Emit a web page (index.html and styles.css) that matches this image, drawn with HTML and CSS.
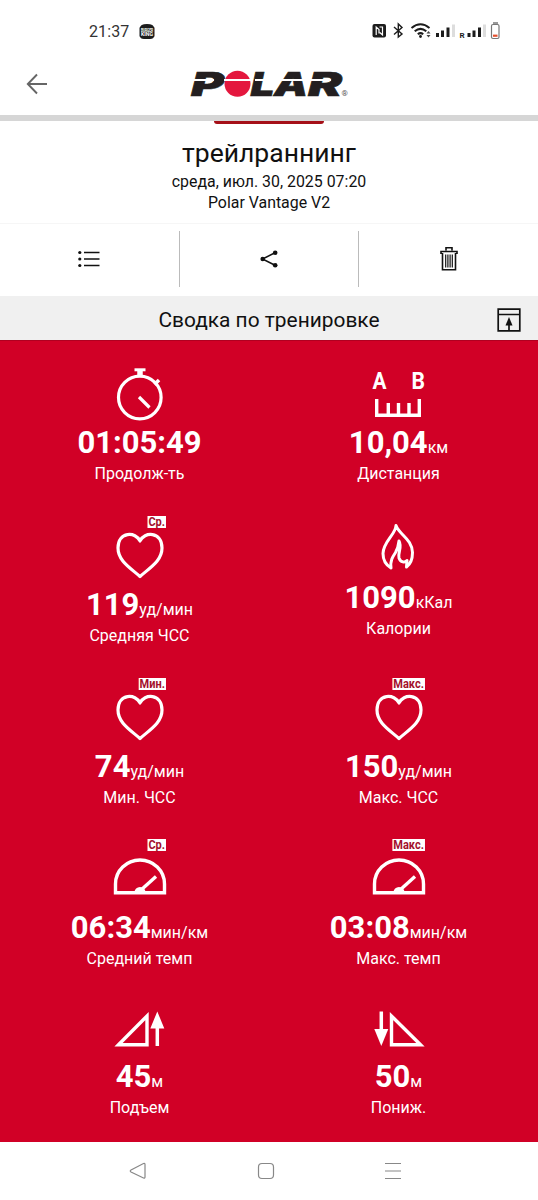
FILE: index.html
```html
<!DOCTYPE html>
<html lang="ru">

<head>
    <meta charset="UTF-8">
    <meta name="viewport" content="width=device-width, initial-scale=1.0">
    <title>Polar - Сводка по тренировке</title>
    <link rel="stylesheet" href="styles.css">
</head>

<body>
    <!-- shared icons -->
    <svg class="sprite" width="0" height="0">
        <symbol id="heart" viewBox="0 0 54 72">
            <path d="M27 26C23 16.500 5 16 5 33C5 46 17.500 53 27 61.500C36.500 53 49 46 49 33C49 16 31 16.500 27 26Z" fill="none" stroke="#fff" stroke-width="3.200" stroke-linejoin="round" />
        </symbol>
        <symbol id="gauge" viewBox="0 0 54 72">
            <path d="M2.500 54.800V46A24.500 24 0 0 1 51.500 46V54.800Z" fill="none" stroke="#fff" stroke-width="3.400" />
            <path d="M28 52L43 38.500" stroke="#fff" stroke-width="3.400" />
            <path d="M21.500 54.500A5.500 5.500 0 0 1 32.500 54.500Z" fill="#fff" />
        </symbol>
    </svg>

    <div class="status-bar">
        <div class="status-left">
            <span class="clock">21:37</span>
            <svg width="16" height="17" viewBox="0 0 16 17">
                <path d="M1 5Q1 1 8 1T15 5ZM1 13Q1 16 5 16H11Q15 16 15 13Z" fill="#1c1c1c" />
                <rect x="0.500" y="4" width="15" height="10" rx="1" fill="#1c1c1c" />
                <text x="2" y="8.800" font-size="4.500" textLength="12" lengthAdjust="spacingAndGlyphs">BURGER</text>
                <text x="2" y="13" font-size="4.500" textLength="12" lengthAdjust="spacingAndGlyphs">KING</text>
            </svg>
        </div>
        <svg width="132" height="20" viewBox="0 0 132 20">
            <!-- nfc -->
            <rect x="0.500" y="3" width="13.500" height="13.500" rx="2" fill="#1c1c1c" />
            <path d="M4.200 14V6L7 8.500V12.500M7.500 6H10.500V14L7.800 11.500" fill="none" stroke="#fff" stroke-width="1.200" />
            <!-- bluetooth -->
            <path d="M22 6L30 13L26.300 16V3L30 6.500L22 13.500" fill="none" stroke="#1c1c1c" stroke-width="1.400" />
            <!-- wifi -->
            <g fill="none" stroke="#1c1c1c" stroke-width="2">
                <path d="M39.500 7Q48.500 -0.500 57.500 7" />
                <path d="M42.700 10.300Q48.500 5.500 54.300 10.300" />
                <path d="M45.800 13.300Q48.500 11 51.200 13.300" />
            </g>
            <circle cx="48.500" cy="15.500" r="1.400" fill="#1c1c1c" />
            <path d="M54.500 12.500L56.500 10L58.500 12.500ZM54.500 14L56.500 16.500L58.500 14Z" fill="#444" />
            <!-- signal -->
            <path d="M65.500 16V12M70.500 16V9.500M76 16V6.500" stroke="#1c1c1c" stroke-width="3" />
            <path d="M81.500 16V3.500" stroke="#ddd" stroke-width="3" />
            <text x="87.500" y="17" font-size="8" class="roaming">R</text>
            <path d="M97 16V12M102 16V9.500M107.500 16V6.500" stroke="#1c1c1c" stroke-width="3" />
            <path d="M112.500 16V3.500" stroke="#ddd" stroke-width="3" />
            <!-- battery -->
            <path d="M121 2H126" stroke="#999" stroke-width="2" />
            <rect x="119.500" y="3.500" width="7.500" height="14" rx="1.500" fill="#fff" stroke="#777" stroke-width="1.200" />
            <path d="M121 14.700H125.500" stroke="#e4502e" stroke-width="2.200" />
        </svg>
    </div>

    <div class="header">
        <svg class="back" width="22" height="22" viewBox="0 0 22 22">
            <path d="M21 11H2M11 1.500L1.800 11L11 20.500" fill="none" stroke="#666" stroke-width="1.900" />
        </svg>
        <svg class="logo" width="166" height="36" viewBox="-3 -3 166 36">
            <g class="logo-text">
                <text x="0" y="27" textLength="33" lengthAdjust="spacingAndGlyphs">P</text>
                <text x="59.500" y="27" textLength="24" lengthAdjust="spacingAndGlyphs">L</text>
                <text x="83" y="27" textLength="34" lengthAdjust="spacingAndGlyphs">A</text>
                <text x="117" y="27" textLength="34" lengthAdjust="spacingAndGlyphs">R</text>
            </g>
            <circle cx="46.500" cy="14.800" r="13" fill="#e4173e" />
            <path d="M0 11H23M33 11H61M64 11H114M118 11H140" stroke="#fff" stroke-width="2" />
            <text x="150.500" y="26.500" font-size="8" class="reg">®</text>
        </svg>
    </div>

    <div class="session">
        <div class="session-tab"></div>
        <h1>трейлраннинг</h1>
        <p>среда, июл. 30, 2025 07:20</p>
        <p>Polar Vantage V2</p>
    </div>

    <div class="actions">
        <div class="action">
            <svg width="22" height="18" viewBox="0 0 22 18">
                <path d="M6 2.500H21.500M6 9H21.500M6 15.500H21.500" stroke="#111" stroke-width="1.500" />
                <g fill="#111">
                    <circle cx="1.800" cy="2.500" r="1.600" />
                    <circle cx="1.800" cy="9" r="1.600" />
                    <circle cx="1.800" cy="15.500" r="1.600" />
                </g>
            </svg>
        </div>
        <div class="action">
            <svg width="18" height="18" viewBox="0 0 18 18">
                <path d="M15.500 2.500L2.500 9L15.500 15.500" fill="none" stroke="#111" stroke-width="1.500" />
                <g fill="#111">
                    <circle cx="15.200" cy="2.700" r="2.300" />
                    <circle cx="2.700" cy="9" r="2.300" />
                    <circle cx="15.200" cy="15.300" r="2.300" />
                </g>
            </svg>
        </div>
        <div class="action">
            <svg width="18" height="26" viewBox="0 0 18 26">
                <path d="M6 4.500V1.700H12V4.500M1 8V5.500H17V8M2.500 7V23.700H15.500V7" fill="none" stroke="#111" stroke-width="1.600" />
                <path d="M5.700 8.500V21.500M7.900 8.500V21.500M10.100 8.500V21.500M12.300 8.500V21.500" stroke="#111" stroke-width="1.200" />
            </svg>
        </div>
    </div>

    <div class="section-bar">
        <h2>Сводка по тренировке</h2>
        <svg width="24" height="24" viewBox="0 0 24 24">
            <path d="M1.200 1.200H22.800V22.800H1.200ZM1 6.500H23M12 22V13" fill="none" stroke="#111" stroke-width="1.700" />
            <path d="M8.500 17.500L12 9L15.500 17.500Z" fill="#111" />
        </svg>
    </div>

    <div class="summary">
        <div class="cell">
            <div class="icon icon-top">
                <svg width="54" height="57" viewBox="0 0 54 57">
                    <g fill="none" stroke="#fff">
                        <circle cx="26.800" cy="29.500" r="21.300" stroke-width="3.200" />
                        <path d="M21.500 1.800H32.500" stroke-width="3" />
                        <path d="M27 2V8" stroke-width="5.500" />
                        <path d="M41.500 16.500L46 12" stroke-width="3.500" />
                        <path d="M26 29L36.500 39.500" stroke-width="3.200" />
                    </g>
                </svg>
            </div>
            <div class="value">01:05:49</div>
            <div class="label">Продолж-ть</div>
        </div>
        <div class="cell">
            <div class="icon icon-top">
                <svg width="54" height="57" viewBox="0 0 54 57">
                    <g class="ab">
                        <text x="0.500" y="20.500" textLength="14" lengthAdjust="spacingAndGlyphs">A</text>
                        <text x="39.500" y="20.500" textLength="13.500" lengthAdjust="spacingAndGlyphs">B</text>
                    </g>
                    <path d="M4.700 31V47.200H47.300V31M16.300 35V46M26.500 35V46M37 35V46" fill="none" stroke="#fff" stroke-width="3.400" />
                </svg>
            </div>
            <div class="value">10,04<span>км</span></div>
            <div class="label">Дистанция</div>
        </div>

        <div class="cell">
            <div class="icon">
                <svg width="54" height="72"><use href="#heart" /></svg>
                <span class="badge">Ср.</span>
            </div>
            <div class="value">119<span>уд/мин</span></div>
            <div class="label">Средняя ЧСС</div>
        </div>
        <div class="cell">
            <div class="icon icon-flame">
                <svg width="54" height="64" viewBox="0 0 54 64">
                    <path d="M24 10.500C23.500 20 11.500 26 11 38.500C11 46 14 50 19 53C18 46 20.500 42 23.500 37.500C25.500 34 26.500 31 27 26C30.500 32 25.500 38 27 43C28.500 47.500 33 48 35 45.500L34.500 52C38.500 49 40.500 44 40.500 37.500C40 24 27.500 20 24 10.500Z" fill="none" stroke="#fff" stroke-width="3" stroke-linejoin="round" />
                </svg>
            </div>
            <div class="value">1090<span>кКал</span></div>
            <div class="label">Калории</div>
        </div>

        <div class="cell">
            <div class="icon">
                <svg width="54" height="72"><use href="#heart" /></svg>
                <span class="badge">Мин.</span>
            </div>
            <div class="value">74<span>уд/мин</span></div>
            <div class="label">Мин. ЧСС</div>
        </div>
        <div class="cell">
            <div class="icon">
                <svg width="54" height="72"><use href="#heart" /></svg>
                <span class="badge">Макс.</span>
            </div>
            <div class="value">150<span>уд/мин</span></div>
            <div class="label">Макс. ЧСС</div>
        </div>

        <div class="cell">
            <div class="icon">
                <svg width="54" height="72"><use href="#gauge" /></svg>
                <span class="badge">Ср.</span>
            </div>
            <div class="value">06:34<span>мин/км</span></div>
            <div class="label">Средний темп</div>
        </div>
        <div class="cell">
            <div class="icon">
                <svg width="54" height="72"><use href="#gauge" /></svg>
                <span class="badge">Макс.</span>
            </div>
            <div class="value">03:08<span>мин/км</span></div>
            <div class="label">Макс. темп</div>
        </div>

        <div class="cell cell-last">
            <div class="icon icon-climb">
                <svg width="54" height="47" viewBox="0 0 54 47">
                    <path d="M5.500 33.700L34 5V33.700Z" fill="none" stroke="#fff" stroke-width="3.400" />
                    <path d="M44.300 35V14" stroke="#fff" stroke-width="3.500" />
                    <path d="M37.300 17.500L44.300 0.500L51.300 17.500Z" fill="#fff" />
                </svg>
            </div>
            <div class="value">45<span>м</span></div>
            <div class="label">Подъем</div>
        </div>
        <div class="cell cell-last">
            <div class="icon icon-climb">
                <svg width="54" height="47" viewBox="0 0 54 47">
                    <path d="M48.500 33.700L19.500 5V33.700Z" fill="none" stroke="#fff" stroke-width="3.400" />
                    <path d="M9.300 0.500V20" stroke="#fff" stroke-width="3.500" />
                    <path d="M2.300 18L9.300 35L16.300 18Z" fill="#fff" />
                </svg>
            </div>
            <div class="value">50<span>м</span></div>
            <div class="label">Пониж.</div>
        </div>
    </div>

    <div class="nav-bar">
        <svg width="18" height="18" viewBox="0 0 18 18">
            <path d="M14.500 1.500Q16 1 16 2.500V15Q16 16.500 14.500 16L2 10Q0.500 9 2 8Z" />
        </svg>
        <svg width="18" height="18" viewBox="0 0 18 18">
            <rect x="1.500" y="1.500" width="15" height="15" rx="3.500" />
        </svg>
        <svg width="18" height="18" viewBox="0 0 18 18">
            <path d="M1 1.500H17M1 9H17M1 16.500H17" />
        </svg>
    </div>
</body>

</html>
```
FILE: styles.css
```css
* {
    box-sizing: border-box;
}

body {
    font-family: Roboto, 'Liberation Sans', sans-serif;
    background-color: #fff;
    color: #111;
    margin: 0;
    height: 1200px;
    display: flex;
    flex-direction: column;
}

svg {
    display: block;
    overflow: visible;
}

.sprite {
    position: absolute;
}

.status-bar {
    height: 53px;
    padding: 9px 34px 0 89px;
    display: flex;
    justify-content: space-between;
    align-items: center;
}

.status-left {
    display: flex;
    align-items: center;
    gap: 10px;
}

.status-left text {
    fill: #fff;
    font-weight: bold;
}

.clock {
    font-size: 16px;
    letter-spacing: 0.1px;
    color: #333;
}

.roaming {
    fill: #1c1c1c;
    font-weight: bold;
}

.header {
    height: 68px;
    padding: 0 26px 0 26px;
    border-bottom: 6px solid #d6d6d6;
    display: flex;
    align-items: center;
}

.logo {
    margin-left: 140px;
}

.logo-text {
    font-family: Inter, Roboto, sans-serif;
    font-size: 33px;
    font-weight: 900;
    font-style: italic;
    fill: #231f20;
    stroke: #231f20;
    stroke-width: 0.6px;
}

.reg {
    fill: #555;
}

.session {
    height: 103px;
    border-bottom: 1px solid #f6f6f6;
    text-align: center;
}

.session-tab {
    width: 110px;
    height: 3px;
    margin: 0 auto;
    background-color: #a51018;
    border-radius: 0 0 8px 8px;
}

.session h1 {
    margin: 13px 0 2px;
    font-size: 26.5px;
    line-height: 32px;
    font-weight: normal;
}

.session p {
    margin: 0;
    font-size: 15.9px;
    line-height: 21px;
}

.actions {
    height: 72px;
    padding: 7px 0 9px;
    display: flex;
}

.action {
    flex: 1;
    display: flex;
    align-items: center;
    justify-content: center;
}

.action + .action {
    border-left: 1px solid #bbb;
}

.section-bar {
    height: 44px;
    padding: 3px 17px 0 41px;
    background-color: #f0f0f0;
    display: flex;
    align-items: center;
}

.section-bar h2 {
    flex: 1;
    margin: 0;
    font-size: 20.9px;
    line-height: 24px;
    font-weight: normal;
    text-align: center;
}

.summary {
    height: 802px;
    padding: 0 10px;
    background-color: #d10026;
    border-top: 1px solid #b00020;
    color: #fff;
    display: grid;
    grid-template-columns: 1fr 1fr;
    grid-template-rows: 147px 162px 161px 162px 149px;
}

.cell {
    padding-top: 27px;
    display: flex;
    flex-direction: column;
    align-items: center;
}

.cell-last {
    padding-top: 38px;
}

.icon {
    position: relative;
    width: 54px;
    height: 71px;
}

.icon-top {
    height: 56px;
}

.icon-flame {
    height: 64px;
}

.icon-climb {
    height: 47px;
}

/* small tag over the top right corner of the icon */
.badge {
    position: absolute;
    top: 1px;
    right: 1px;
    padding: 0 1px;
    background-color: #fff;
    color: #a3102c;
    font-size: 12.5px;
    font-weight: bold;
    line-height: 12px;
    transform: scaleX(0.88);
    transform-origin: right;
}

.value {
    height: 37px;
    font-size: 31px;
    font-weight: bold;
    line-height: 37px;
    white-space: nowrap;
}

.value span {
    font-size: 16px;
    font-weight: normal;
    line-height: 1;
}

.label {
    font-size: 16px;
    line-height: 26px;
}

.ab {
    fill: #fff;
    font-size: 23px;
    font-weight: bold;
}

.nav-bar {
    height: 58px;
    padding: 0 136px 0 129px;
    display: flex;
    justify-content: space-between;
    align-items: center;
}

.nav-bar svg {
    fill: none;
    stroke: #888;
    stroke-width: 1.2;
}
```
